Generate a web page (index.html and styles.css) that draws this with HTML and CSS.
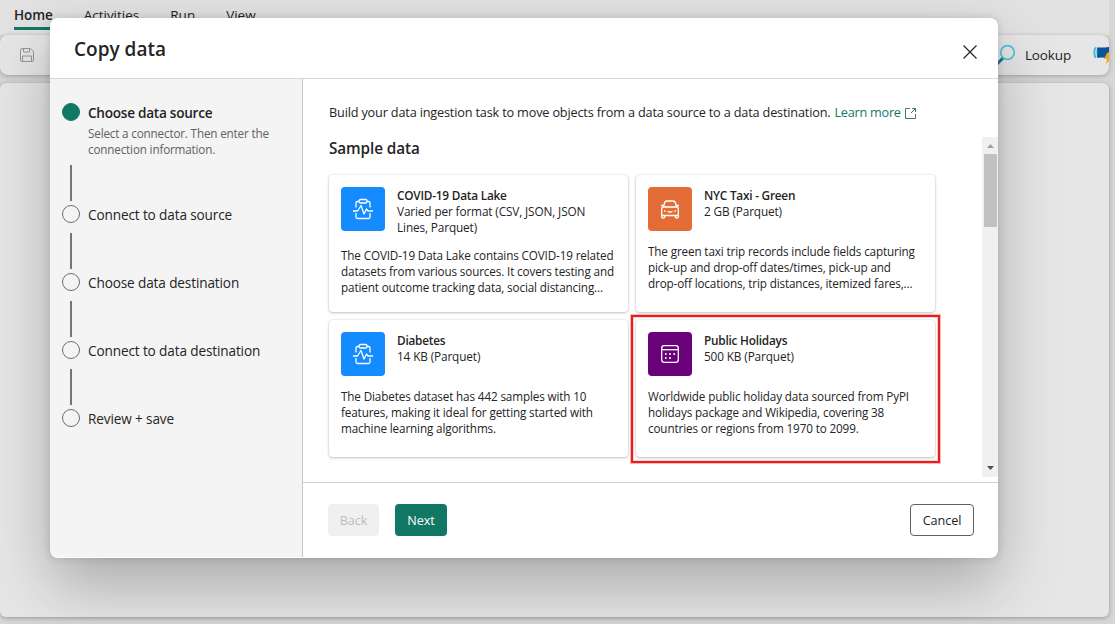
FILE: index.html
```
<!DOCTYPE html>
<html lang="en">
<head>
<meta charset="utf-8">
<title>Copy data</title>
<link rel="stylesheet" href="styles.css">
</head>
<body>
<div class="app">
  <nav class="tabs"><span class="tab tab-active">Home</span><span class="tab">Activities</span><span class="tab">Run</span><span class="tab">View</span></nav>
  <div class="toolbar">
    <svg width="16" height="16" viewBox="0 0 16 16" fill="none" stroke="#969696"><path d="M3 1.500h8.500l3 3V13a1.500 1.500 0 0 1-1.500 1.500H3A1.500 1.500 0 0 1 1.500 13V3A1.500 1.500 0 0 1 3 1.500zM4.500 1.500V5h6V1.500M3.500 14.500V9h9v5.500"/></svg>
    <div class="lookup">
      <svg width="20" height="22" viewBox="0 0 20 22" fill="none"><path d="M7.500 13.500L1 20" stroke="#17779a" stroke-width="3"/><circle cx="11.500" cy="8.500" r="6.800" stroke="#4cc5dc" stroke-width="1.700"/></svg>
      <span>Lookup</span>
      <svg class="script-icon" width="16" height="18" viewBox="0 0 16 18"><path d="M3 1q4 1 13 0v11q-9-1-13 0z" fill="#07559b"/><ellipse cx="2.500" cy="6.500" rx="2" ry="5.500" fill="#38b3d1"/><path d="M4.500 1q-2 5 0 11H3.300q-2-6 0-11z" fill="#d3e4ec"/><path d="M14 7l-3 6h3l-1 5 3-3V6z" fill="#f3a51d"/></svg>
    </div>
  </div>
  <div class="canvas"></div>
</div>
<main class="dialog">
  <header class="head"><h1>Copy data</h1>
    <svg width="14" height="14" viewBox="0 0 14 14" stroke="#242424" stroke-width="1.200"><path d="M.5.5l13 13M13.500.5l-13 13"/></svg>
  </header>
  <div class="body">
    <aside class="steps">
      <div class="step current"><i class="dot"></i><div class="label"><b>Choose data source</b><p>Select a connector. Then enter the<br>connection information.</p></div></div>
      <div class="line"></div>
      <div class="step"><i class="dot"></i><span class="label">Connect to data source</span></div>
      <div class="line"></div>
      <div class="step"><i class="dot"></i><span class="label">Choose data destination</span></div>
      <div class="line"></div>
      <div class="step"><i class="dot"></i><span class="label">Connect to data destination</span></div>
      <div class="line"></div>
      <div class="step"><i class="dot"></i><span class="label">Review + save</span></div>
    </aside>
    <section class="main">
      <p class="intro"><span>Build your data ingestion task to move objects from a data source to a data destination.</span> <a>Learn more</a>
        <svg width="13" height="13" viewBox="0 0 13 13" fill="none" stroke="#4b766c"><path d="M6 1.500H1.500v10h10V7M8 1.500h3.500V5M11.500 1.500L7 6"/></svg></p>
      <div class="scroll">
        <div class="content">
          <h2>Sample data</h2>
          <div class="grid">
            <article class="card">
              <div class="top tall"><div class="tile blue"><svg width="22" height="22" viewBox="0 0 22 22" fill="none" stroke="#fff" stroke-width="1.300" stroke-linejoin="round"><path d="M4 9.500V5a1.500 1.500 0 0 1 1.500-1.500H7m8 0h1.500A1.500 1.500 0 0 1 18 5v4.500M4 15v4a1.500 1.500 0 0 0 1.500 1.500h11A1.500 1.500 0 0 0 18 19v-4"/><rect x="7" y="1.500" width="8" height="3.500" rx="1.500"/><path d="M1 13h4.500L9 7.500l3 8.500 2.500-5 1.500 2h5"/></svg></div>
              <div class="meta"><b>COVID-19 Data Lake</b><span>Varied per format (CSV, JSON, JSON<br>Lines, Parquet)</span></div></div>
              <p class="desc">The COVID-19 Data Lake contains COVID-19 related<br>datasets from various sources. It covers testing and<br>patient outcome tracking data, social distancing...</p>
            </article>
            <article class="card">
              <div class="top"><div class="tile orange"><svg width="22" height="22" viewBox="0 0 22 22" fill="none" stroke="#fff" stroke-width="1.300" stroke-linejoin="round"><path d="M2.700 17.500V11q0-2 2-2h12.600q2 0 2 2v6.500zM4.500 9l1-4q.5-2 2.500-2h6q2 0 2.500 2l1 4M2 7.500h2.500m13 0H20M2.700 17.500v1.200q0 1.300 1.500 1.300t1.500-1.300v-1.200m10.600 0v1.200q0 1.300 1.500 1.300t1.500-1.300v-1.200M8.500 13.500q2.500 1 5 0"/><path d="M5 12.200h1.500v1.500H5zM15.500 12.200H17v1.500h-1.500z" fill="#fff" stroke="none"/></svg></div>
              <div class="meta"><b>NYC Taxi - Green</b><span>2 GB (Parquet)</span></div></div>
              <p class="desc">The green taxi trip records include fields capturing<br>pick-up and drop-off dates/times, pick-up and<br>drop-off locations, trip distances, itemized fares,...</p>
            </article>
            <article class="card">
              <div class="top"><div class="tile blue"><svg width="22" height="22" viewBox="0 0 22 22" fill="none" stroke="#fff" stroke-width="1.300" stroke-linejoin="round"><path d="M4 9.500V5a1.500 1.500 0 0 1 1.500-1.500H7m8 0h1.500A1.500 1.500 0 0 1 18 5v4.500M4 15v4a1.500 1.500 0 0 0 1.500 1.500h11A1.500 1.500 0 0 0 18 19v-4"/><rect x="7" y="1.500" width="8" height="3.500" rx="1.500"/><path d="M1 13h4.500L9 7.500l3 8.500 2.500-5 1.500 2h5"/></svg></div>
              <div class="meta"><b>Diabetes</b><span>14 KB (Parquet)</span></div></div>
              <p class="desc">The Diabetes dataset has 442 samples with 10<br>features, making it ideal for getting started with<br>machine learning algorithms.</p>
            </article>
            <article class="card marked">
              <div class="top"><div class="tile purple"><svg width="22" height="22" viewBox="0 0 22 22" fill="none" stroke="#fff" stroke-width="1.300"><rect x="2.700" y="2.700" width="16.600" height="16.600" rx="2.500"/><path d="M3 6.700h16"/><g fill="#fff" stroke="none"><circle cx="6.800" cy="11" r="1"/><circle cx="11" cy="11" r="1"/><circle cx="15.200" cy="11" r="1"/><circle cx="6.800" cy="15" r="1"/><circle cx="11" cy="15" r="1"/></g></svg></div>
              <div class="meta"><b>Public Holidays</b><span>500 KB (Parquet)</span></div></div>
              <p class="desc">Worldwide public holiday data sourced from PyPI<br>holidays package and Wikipedia, covering 38<br>countries or regions from 1970 to 2099.</p>
            </article>
          </div>
        </div>
        <div class="bar">
          <svg width="7" height="4" viewBox="0 0 7 4"><path d="M0 4L3.500 0 7 4z" fill="#a0a0a0"/></svg>
          <div class="thumb"></div>
          <svg class="down" width="7" height="4" viewBox="0 0 7 4"><path d="M0 0L3.500 4 7 0z" fill="#505050"/></svg>
        </div>
      </div>
      <footer><button class="back">Back</button><button class="next">Next</button><button class="cancel">Cancel</button></footer>
    </section>
  </div>
</main>
</body>
</html>
```
FILE: styles.css
```
* { box-sizing: border-box; }
body { margin: 0; width: 1115px; height: 624px; overflow: hidden; background: #d6d6d6; color: #242424; font: 12px/16px "Open Sans", "Noto Sans", sans-serif; position: relative; }
h1, h2, p { margin: 0; }
b { font-weight: 600; }
.app { width: 1109px; }
.tabs { height: 35px; background: #e2e2e2; padding: 5px 0 0 14px; display: flex; gap: 31px; font-size: 13.500px; line-height: 21px; }
.tab { height: 25px; }
.tab-active { border-bottom: 3px solid #117865; font-weight: 600; letter-spacing: -.1px; }
.toolbar { height: 40px; background: #e6e6e6; border-radius: 8px; box-shadow: 0 1px 4px rgba(0,0,0,.25); display: flex; justify-content: space-between; align-items: center; padding-left: 19px; }
.lookup { display: flex; align-items: center; font-size: 13.500px; letter-spacing: -.15px; height: 40px; overflow: hidden; }
.lookup svg { margin-top: -1px; }
.lookup span { margin: 0 22px 0 9px; }
.lookup .script-icon { margin-top: -1px; }
.canvas { margin-top: 8px; height: 534px; background: #e6e6e6; border-radius: 6px; box-shadow: 0 1px 4px rgba(0,0,0,.3); }
.dialog { position: absolute; left: 50px; top: 18px; width: 948px; height: 540px; border-radius: 8px; background: #fff; box-shadow: 0 0 8px rgba(0,0,0,.14), 0 28px 62px rgba(0,0,0,.26); }
.head { height: 61px; border-bottom: 1px solid #d6d6d6; display: flex; justify-content: space-between; padding: 17px 21px 0 24px; }
.head svg { margin-top: 10px; }
h1 { font-size: 19px; line-height: 28px; font-weight: 600; }
.body { display: flex; height: 478px; }
.steps { width: 253px; background: #f4f4f4; border-right: 1px solid #c8c8c8; padding: 24px 0 0 12px; border-radius: 0 0 0 8px; }
.step { display: flex; height: 18px; font-size: 13.600px; line-height: 20px; letter-spacing: -.13px; gap: 8px; }
.step.current { height: 58px; }
.step b { letter-spacing: -.26px; }
.dot { flex: none; width: 18px; height: 18px; border: 1px solid #6e6e6e; border-radius: 50%; }
.current .dot { background: #117865; border-color: #117865; }
.step p { color: #616161; font-size: 11.700px; line-height: 16px; letter-spacing: -.17px; margin-top: 2px; }
.label { white-space: nowrap; }
.line { width: 2px; height: 36px; margin: 10px 0 4px 8px; background: #757575; }
.current + .line { margin-top: 4px; }
.main { flex: 1; min-width: 0; display: flex; flex-direction: column; }
.intro { height: 58px; padding: 25px 0 0 26px; font-size: 12.700px; letter-spacing: -.17px; display: flex; align-items: flex-start; gap: 4px; line-height: 17px; white-space: nowrap; }
.intro a { color: #117865; letter-spacing: -.25px; }
.intro svg { margin: 3px 0 0 -1px; }
.scroll { height: 340px; display: flex; justify-content: space-between; }
.content { padding: 0 0 0 26px; }
h2 { font-size: 15.300px; line-height: 23px; height: 38px; font-weight: 600; letter-spacing: -.1px; }
.grid { display: grid; grid-template-columns: 299px 299px; grid-auto-rows: 137px; gap: 8px; }
.card { border-radius: 4px; padding: 12px; background: #fff; box-shadow: 0 0 2px rgba(0,0,0,.14), 0 1px 3px rgba(0,0,0,.22); white-space: nowrap; }
.marked { position: relative; }
.marked::after { content: ""; position: absolute; inset: -5px -5px -6px; border: 2px solid #ea1c1c; box-shadow: 0 0 0 1px rgba(234,28,28,.3), inset 0 0 0 1px rgba(234,28,28,.2); }
.top { display: flex; gap: 12px; height: 56px; }
.top.tall { height: 60px; }
.tile { width: 44px; height: 44px; border-radius: 4px; display: grid; place-items: center; }
.blue { background: #148bff; }
.orange { background: #e46c36; }
.purple { background: #68017a; }
.meta { display: flex; flex-direction: column; font-size: 11.800px; letter-spacing: -.13px; }
.meta b { letter-spacing: -.22px; }
.desc { height: 48px; font-size: 11.700px; letter-spacing: -.13px; }
.bar { width: 16px; background: #f0f0f0; display: flex; flex-direction: column; align-items: center; padding-top: 7px; }
.thumb { width: 13px; height: 73px; background: #c1c1c1; margin-top: 6px; }
.down { margin-top: auto; margin-bottom: 7px; }
footer { margin-top: 5px; flex: 1; border-top: 1px solid #d0d0d0; padding: 21px 24px 0 25px; display: flex; }
button { height: 32px; border: 0; border-radius: 4px; padding: 0; font: 12.700px/20px "Open Sans", sans-serif; letter-spacing: -.1px; }
.back { width: 51px; background: #f0f0f0; color: #bdbdbd; }
.next { width: 52px; background: #117865; color: #fff; margin-left: 16px; font-weight: 500; }
.cancel { width: 64px; background: #fff; color: #242424; border: 1px solid #616161; margin-left: auto; }
```
